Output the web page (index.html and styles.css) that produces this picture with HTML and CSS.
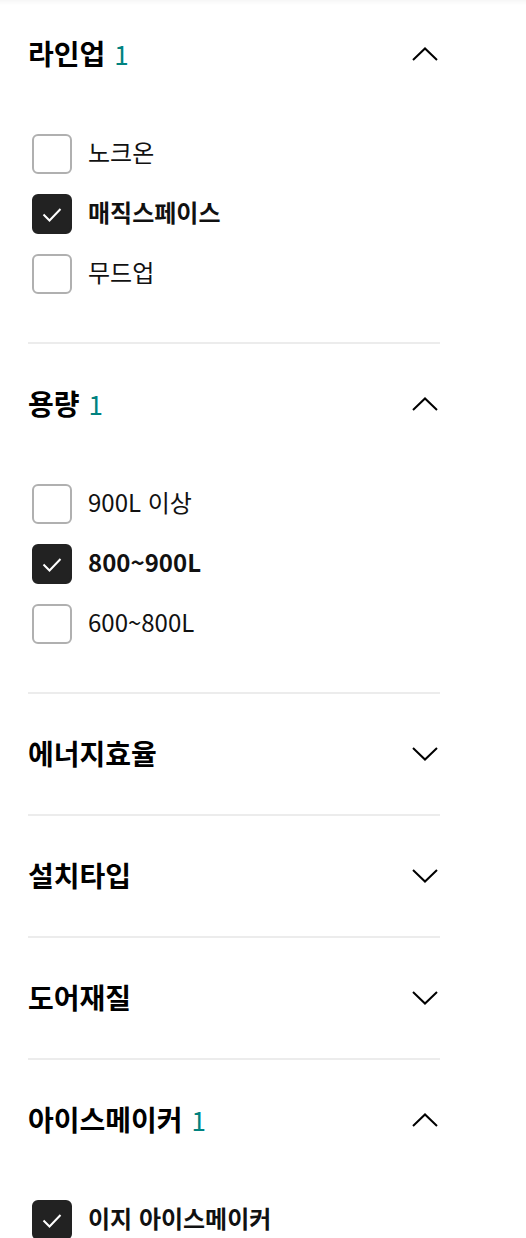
FILE: index.html
```html
<!DOCTYPE html>
<html lang="ko">
<head>
<meta charset="utf-8">
<link rel="stylesheet" href="styles.css">
</head>
<body>
<div class="top-shade"></div>
<div class="filters">
  <section class="section">
    <div class="header"><h3 class="title">라인업<span class="count">1</span></h3>
      <svg class="chev" viewBox="0 0 26 14"><polyline points="1,13 13,1.5 25,13"/></svg></div>
    <ul class="list">
      <li class="item"><span class="box"></span><span class="label">노크온</span></li>
      <li class="item checked"><span class="box"><svg viewBox="0 0 40 40"><polyline points="11.5,20.5 17.5,26.5 28.5,15"/></svg></span><span class="label">매직스페이스</span></li>
      <li class="item"><span class="box"></span><span class="label">무드업</span></li>
    </ul>
  </section>
  <section class="section">
    <div class="header"><h3 class="title">용량<span class="count">1</span></h3>
      <svg class="chev" viewBox="0 0 26 14"><polyline points="1,13 13,1.5 25,13"/></svg></div>
    <ul class="list">
      <li class="item"><span class="box"></span><span class="label">900L 이상</span></li>
      <li class="item checked"><span class="box"><svg viewBox="0 0 40 40"><polyline points="11.5,20.5 17.5,26.5 28.5,15"/></svg></span><span class="label">800~900L</span></li>
      <li class="item"><span class="box"></span><span class="label">600~800L</span></li>
    </ul>
  </section>
  <section class="section">
    <div class="header"><h3 class="title">에너지효율</h3>
      <svg class="chev" viewBox="0 0 26 14"><polyline points="1,1 13,12.5 25,1"/></svg></div>
  </section>
  <section class="section">
    <div class="header"><h3 class="title">설치타입</h3>
      <svg class="chev" viewBox="0 0 26 14"><polyline points="1,1 13,12.5 25,1"/></svg></div>
  </section>
  <section class="section">
    <div class="header"><h3 class="title">도어재질</h3>
      <svg class="chev" viewBox="0 0 26 14"><polyline points="1,1 13,12.5 25,1"/></svg></div>
  </section>
  <section class="section">
    <div class="header"><h3 class="title">아이스메이커<span class="count">1</span></h3>
      <svg class="chev" viewBox="0 0 26 14"><polyline points="1,13 13,1.5 25,13"/></svg></div>
    <ul class="list">
      <li class="item checked"><span class="box"><svg viewBox="0 0 40 40"><polyline points="11.5,20.5 17.5,26.5 28.5,15"/></svg></span><span class="label">이지 아이스메이커</span></li>
    </ul>
  </section>
</div>
</body>
</html>
```
FILE: styles.css
```css
* { box-sizing: border-box; }
html, body { margin: 0; padding: 0; background: #fff; }
body {
  font-family: "Noto Sans CJK KR", "Noto Sans", sans-serif;
  color: #111;
  width: 526px;
  overflow: hidden;
}
.top-shade {
  position: fixed;
  top: 0; left: 0; right: 0;
  height: 5px;
  background: linear-gradient(rgba(0,0,0,0.035), rgba(0,0,0,0));
  z-index: 2;
}
.filters {
  width: 412px;
  margin: -6px 0 0 28px;
}
.section {
  border-bottom: 2px solid #ececec;
}
.header {
  height: 120px;
  display: flex;
  align-items: center;
  justify-content: space-between;
}
.title {
  margin: 0;
  font-size: 28px;
  line-height: 40px;
  padding-bottom: 2px;
  font-weight: 700;
  color: #000;
  display: flex;
  align-items: baseline;
}
.count {
  font-weight: 400;
  color: #00827f;
  margin-left: 9px;
  font-size: 26px;
}
.chev {
  width: 26px;
  height: 14px;
  margin-right: 2px;
  fill: none;
  stroke: #000;
  stroke-width: 2;
}
.list {
  list-style: none;
  margin: 0;
  padding: 20px 0 48px 4px;
  display: flex;
  flex-direction: column;
  gap: 20px;
}
.item {
  display: flex;
  align-items: center;
  gap: 16px;
  height: 40px;
}
.box {
  width: 40px;
  height: 40px;
  border: 2px solid #b0b0b0;
  border-radius: 6px;
  flex: none;
  display: flex;
}
.checked .box {
  background: #222;
  border-color: #222;
}
.box svg {
  margin: -2px;
  width: 40px;
  height: 40px;
  fill: none;
  stroke: #fff;
  stroke-width: 2;
}
.label {
  font-size: 24px;
  line-height: 34px;
  padding-bottom: 4px;
  font-weight: 400;
  color: #111;
}
.checked .label {
  font-weight: 700;
}
```
